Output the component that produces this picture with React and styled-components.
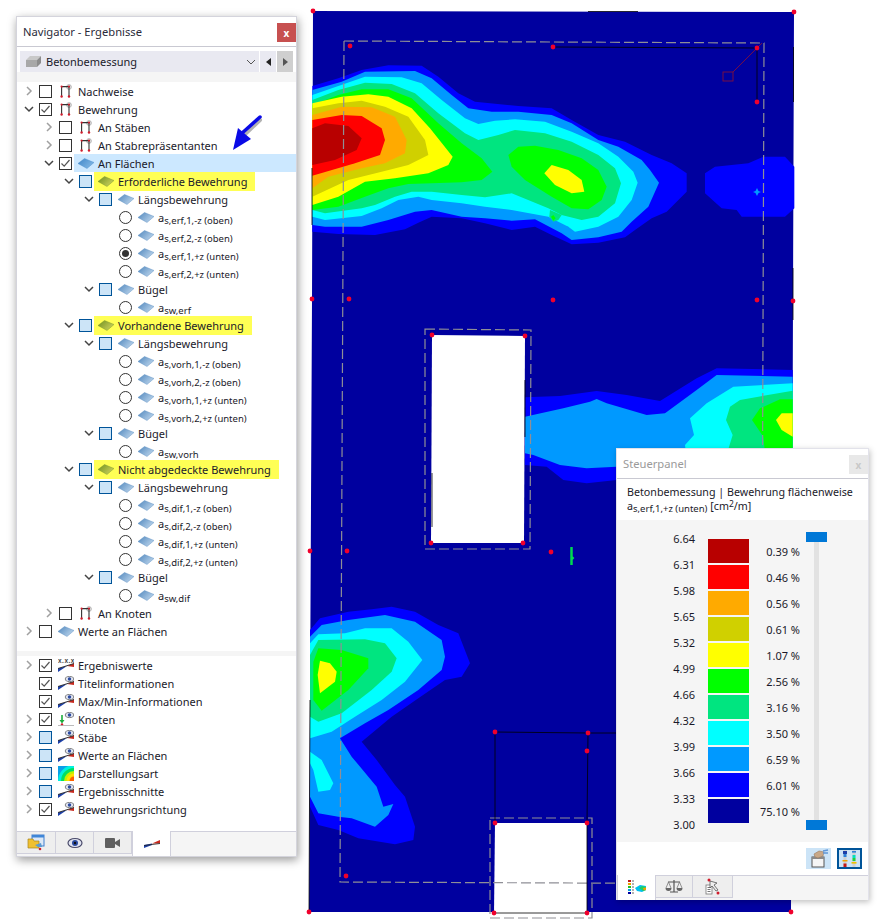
import styled, { createGlobalStyle } from 'styled-components'

const GlobalStyle = createGlobalStyle`
html, body {
  margin: 0;
  background: #fff;
}
* {
  box-sizing: border-box;
}
`

const Page = styled.div`
position: relative;
display: flex;
align-items: flex-start;
width: 878px;
height: 922px;
overflow: hidden;
background: #fff;
font-family: "Noto Sans", "Open Sans", sans-serif;
font-size: 11px;
color: #1a1a2a;
`

// navigator
const Navigator = styled.aside`
position: relative;
display: flex;
flex-direction: column;
flex: none;
width: 281px;
height: 841px;
margin: 16px 8px 0 16px;
background: #fff;
border: 1px solid #d4d4dc;
box-shadow: 1px 3px 9px rgba(0, 0, 0, 0.4);
`

const TitleBar = styled.div`
display: flex;
align-items: center;
justify-content: space-between;
flex: none;
height: 30px;
padding: 0 0 0 6px;
border-bottom: 1px solid #c9c9d2;
font-size: 11.2px;
color: ${p => (p.$muted ? '#9a9a9a' : '#2b2b3a')};
`

const CloseButton = styled.div`
display: flex;
align-items: center;
justify-content: center;
width: 19px;
height: 19px;
margin-top: 2px;
background: ${p => (p.$muted ? '#e8e8e8' : '#c75050')};
color: ${p => (p.$muted ? '#c8c8c8' : '#fff')};
font-weight: 700;
font-size: 10px;
line-height: 1;
`

const SelectRow = styled.div`
display: flex;
flex: none;
height: 21px;
margin: 4px 3px 0 3px;
gap: 1px;
`

const Select = styled.div`
display: flex;
align-items: center;
flex: 1;
padding: 0 3px 0 6px;
gap: 4px;
background: #e9e9f1;
span {
  flex: 1;
}
`

const StepButton = styled.div`
display: flex;
align-items: center;
justify-content: center;
width: 16px;
background: ${p => (p.$active ? '#cfcfcf' : '#e9e9f1')};
`

const Strip = styled.div`
flex: none;
height: ${p => p.$h}px;
background: #f5f5f5;
`

const Spacer = styled.div`
flex: none;
height: 11px;
`

const TreeList = styled.div`
display: flex;
flex-direction: column;
flex: none;
padding-left: 1px;
`

const Row = styled.div`
display: flex;
align-items: flex-start;
height: 18px;
padding-left: ${p => p.$level * 20}px;
`

const Chevron = styled.div`
display: flex;
align-items: center;
justify-content: center;
flex: none;
width: 21px;
height: 18px;
`

const CheckBox = styled.div`
display: flex;
align-items: center;
justify-content: center;
flex: none;
width: 13px;
height: 13px;
margin-top: 3px;
background: ${p => (p.$kind === 'blue' ? '#cce4f7' : '#fff')};
border: 1px solid ${p => (p.$kind === 'blue' ? '#005499' : '#333')};
`

const Radio = styled.div`
display: flex;
align-items: center;
justify-content: center;
flex: none;
width: 13px;
height: 13px;
margin-top: 3px;
border: 1px solid #333;
border-radius: 50%;
background: #fff;
&::after {
  content: '';
  display: ${p => (p.$on ? 'block' : 'none')};
  width: 7px;
  height: 7px;
  border-radius: 50%;
  background: #333;
}
`

const RowBody = styled.div`
display: flex;
align-items: center;
flex: ${p => (p.$selected ? 1 : 'none')};
height: ${p => (p.$marked ? 19 : 18)}px;
margin-left: 2px;
padding: 0 8px ${p => (p.$marked ? 1 : 0)}px 4px;
gap: 5px;
background: ${p => (p.$selected ? '#cce8ff' : p.$marked ? '#ffff55' : 'transparent')};
white-space: nowrap;
`

const IconSlot = styled.span`
display: flex;
flex: none;
width: 16px;
height: 15px;
margin-right: -1px;
`

const Label = styled.span`
padding-top: 2px;
line-height: 16px;
`

const Small = styled.span`
font-size: 9.5px;
position: relative;
top: 2px;
`

const TabBar = styled.div`
display: flex;
flex: none;
height: 25px;
margin-top: auto;
background: #f5f5f5;
border-top: 1px solid #d0d0dc;
`

const Tab = styled.div`
display: flex;
align-items: center;
justify-content: center;
width: ${p => p.$w}px;
height: ${p => (p.$active ? 25 : 22)}px;
margin-top: ${p => (p.$active ? -1 : 0)}px;
background: ${p => (p.$active ? '#fff' : '#eeeeee')};
border-right: 1px solid #d0d0dc;
border-left: ${p => (p.$active ? '1px solid #d0d0dc' : 'none')};
border-bottom: ${p => (p.$active ? 'none' : '1px solid #d0d0dc')};
`

const ArrowMark = styled.svg`
position: absolute;
left: 208px;
top: 92px;
`

const Canvas = styled.svg`
display: block;
flex: none;
`

// control panel
const ControlPanel = styled.aside`
position: absolute;
left: 616px;
top: 448px;
display: flex;
flex-direction: column;
width: 253px;
height: 452px;
background: #fff;
border: 1px solid #e2e2ea;
box-shadow: 1px 2px 6px rgba(0, 0, 0, 0.25);
`

const PanelHead = styled.div`
flex: none;
height: 41px;
padding: 6px 10px 0;
font-size: 10.7px;
line-height: 14px;
white-space: nowrap;
sup {
  font-size: 8.5px;
  line-height: 0;
  vertical-align: 3px;
}
`

const LegendArea = styled.div`
display: flex;
flex: none;
height: 322px;
padding: 6px 0 0 0;
background: #f5f5f5;
`

const Values = styled.div`
display: flex;
flex-direction: column;
flex: none;
width: 78px;
text-align: right;
div {
  height: 26px;
  line-height: 26px;
}
`

const Bars = styled.div`
flex: none;
width: 41px;
margin: 13px 0 0 13px;
`

const Bar = styled.div`
height: 24px;
margin-bottom: 2px;
background: ${p => p.$color};
`

const Percents = styled.div`
display: flex;
flex-direction: column;
flex: none;
width: 51px;
margin-top: 13px;
text-align: right;
div {
  height: 26px;
  line-height: 26px;
}
`

const Slider = styled.div`
display: flex;
flex-direction: column;
align-items: center;
flex: none;
width: 21px;
height: 298px;
margin: 6px 0 0 6px;
`

const SliderThumb = styled.div`
flex: none;
width: 21px;
height: 10px;
background: #0078d7;
`

const SliderTrack = styled.div`
flex: 1;
width: 5px;
background: #e2e2e2;
`

const ToolRow = styled.div`
display: flex;
justify-content: flex-end;
align-items: flex-start;
flex: none;
height: 33px;
padding: 6px 6px 0 0;
gap: 6px;
`

const ToolButton = styled.div`
display: flex;
align-items: center;
justify-content: center;
width: 25px;
height: 21px;
background: #cce4f7;
border: ${p => (p.$framed ? '2px solid #005499' : 'none')};
`

const treeRows = [
  { level: 0, chev: 'closed', box: 'empty', icon: 'frame', text: 'Nachweise' },
  { level: 0, chev: 'open', box: 'checked', icon: 'frame', text: 'Bewehrung' },
  { level: 1, chev: 'closed', box: 'empty', icon: 'frame', text: 'An Stäben' },
  { level: 1, chev: 'closed', box: 'empty', icon: 'frame', text: 'An Stabrepräsentanten' },
  { level: 1, chev: 'open', box: 'checked', icon: 'plateSel', text: 'An Flächen', selected: true },
  { level: 2, chev: 'open', box: 'blue', icon: 'plateGreen', text: 'Erforderliche Bewehrung', marked: true },
  { level: 3, chev: 'open', box: 'blue', icon: 'plate', text: 'Längsbewehrung' },
  { level: 4, radio: true, icon: 'plate', sub: 's,erf,1,-z (oben)' },
  { level: 4, radio: true, icon: 'plate', sub: 's,erf,2,-z (oben)' },
  { level: 4, radio: true, on: true, icon: 'plate', sub: 's,erf,1,+z (unten)' },
  { level: 4, radio: true, icon: 'plate', sub: 's,erf,2,+z (unten)' },
  { level: 3, chev: 'open', box: 'blue', icon: 'plate', text: 'Bügel' },
  { level: 4, radio: true, icon: 'plate', sub: 'sw,erf' },
  { level: 2, chev: 'open', box: 'blue', icon: 'plateGreen', text: 'Vorhandene Bewehrung', marked: true },
  { level: 3, chev: 'open', box: 'blue', icon: 'plate', text: 'Längsbewehrung' },
  { level: 4, radio: true, icon: 'plate', sub: 's,vorh,1,-z (oben)' },
  { level: 4, radio: true, icon: 'plate', sub: 's,vorh,2,-z (oben)' },
  { level: 4, radio: true, icon: 'plate', sub: 's,vorh,1,+z (unten)' },
  { level: 4, radio: true, icon: 'plate', sub: 's,vorh,2,+z (unten)' },
  { level: 3, chev: 'open', box: 'blue', icon: 'plate', text: 'Bügel' },
  { level: 4, radio: true, icon: 'plate', sub: 'sw,vorh' },
  { level: 2, chev: 'open', box: 'blue', icon: 'plateGreen', text: 'Nicht abgedeckte Bewehrung', marked: true },
  { level: 3, chev: 'open', box: 'blue', icon: 'plate', text: 'Längsbewehrung' },
  { level: 4, radio: true, icon: 'plate', sub: 's,dif,1,-z (oben)' },
  { level: 4, radio: true, icon: 'plate', sub: 's,dif,2,-z (oben)' },
  { level: 4, radio: true, icon: 'plate', sub: 's,dif,1,+z (unten)' },
  { level: 4, radio: true, icon: 'plate', sub: 's,dif,2,+z (unten)' },
  { level: 3, chev: 'open', box: 'blue', icon: 'plate', text: 'Bügel' },
  { level: 4, radio: true, icon: 'plate', sub: 'sw,dif' },
  { level: 1, chev: 'closed', box: 'empty', icon: 'frame', text: 'An Knoten' },
  { level: 0, chev: 'closed', box: 'empty', icon: 'plate', text: 'Werte an Flächen' },
]

const optionRows = [
  { level: 0, chev: 'closed', box: 'checked', icon: 'xxx', text: 'Ergebniswerte' },
  { level: 0, box: 'checked', icon: 'eye', text: 'Titelinformationen' },
  { level: 0, box: 'checked', icon: 'eye', text: 'Max/Min-Informationen' },
  { level: 0, chev: 'closed', box: 'checked', icon: 'node', text: 'Knoten' },
  { level: 0, chev: 'closed', box: 'blue', icon: 'eye', text: 'Stäbe' },
  { level: 0, chev: 'closed', box: 'blue', icon: 'eye', text: 'Werte an Flächen' },
  { level: 0, chev: 'closed', box: 'blue', icon: 'contour', text: 'Darstellungsart' },
  { level: 0, chev: 'closed', box: 'blue', icon: 'eye', text: 'Ergebnisschnitte' },
  { level: 0, chev: 'closed', box: 'checked', icon: 'eye', text: 'Bewehrungsrichtung' },
]

const legend = [
  { value: '6.64', color: '#b80000', pct: '0.39 %' },
  { value: '6.31', color: '#ff0000', pct: '0.46 %' },
  { value: '5.98', color: '#ffaa00', pct: '0.56 %' },
  { value: '5.65', color: '#d0d000', pct: '0.61 %' },
  { value: '5.32', color: '#ffff00', pct: '1.07 %' },
  { value: '4.99', color: '#00ff00', pct: '2.56 %' },
  { value: '4.66', color: '#00e580', pct: '3.16 %' },
  { value: '4.32', color: '#00ffff', pct: '3.50 %' },
  { value: '3.99', color: '#0099ff', pct: '6.59 %' },
  { value: '3.66', color: '#0000ff', pct: '6.01 %' },
  { value: '3.33', color: '#00009f', pct: '75.10 %' },
]

const ChevronIcon = ({ open }) => (
  <svg width="10" height="10" viewBox="0 0 10 10">
    {open
      ? <polyline points="1,3 5,7 9,3" fill="none" stroke="#444" strokeWidth="1.5" />
      : <polyline points="3,1 7,5 3,9" fill="none" stroke="#a0a0a0" strokeWidth="1.5" />}
  </svg>
)

const CheckMark = () => (
  <svg width="11" height="11" viewBox="0 0 11 11">
    <polyline points="1.5,5.5 4.2,8.2 9.5,2" fill="none" stroke="#555" strokeWidth="1.2" />
  </svg>
)

const Wedge = () => (
  <>
    <polygon points="0,10.5 9,8 0,14" fill="#1c3fa8" />
    <polygon points="9,8 16,5.5 16,9" fill="#c8291e" />
    <line x1="0" y1="10.5" x2="16" y2="5.5" stroke="#222" strokeWidth="0.9" />
  </>
)

const Eye = () => (
  <>
    <ellipse cx="11.5" cy="3" rx="4.2" ry="2.6" fill="#dfe3f0" stroke="#555" strokeWidth="0.7" />
    <circle cx="11.5" cy="3" r="1.7" fill="#2a4aa0" />
  </>
)

const TreeIcon = ({ name }) => {
  if (name === 'frame') {
    return (
      <svg width="16" height="15" viewBox="0 0 16 15">
        <circle cx="11" cy="3" r="2.4" fill="#e2e2e2" stroke="#a0a0a0" strokeWidth="0.7" />
        <path d="M3.6 2.6H11M3.6 2.6V12.5M11 2.6V12.5" fill="none" stroke="#333" strokeWidth="1.1" />
        <circle cx="3.6" cy="2.6" r="1.1" fill="#d01c2c" />
        <circle cx="11" cy="2.6" r="1.1" fill="#d01c2c" />
        <circle cx="3.6" cy="12.5" r="1.2" fill="#d01c2c" />
        <circle cx="11" cy="12.5" r="1.2" fill="#d01c2c" />
      </svg>
    )
  }
  if (name === 'plate' || name === 'plateSel' || name === 'plateGreen') {
    const c = {
      plate: ['#4f86bd', '#b8d2ea'],
      plateSel: ['#3f86c8', '#7fb6e4'],
      plateGreen: ['#6f8f20', '#c9cf5a'],
    }[name]
    return (
      <svg width="16" height="15" viewBox="0 0 16 15">
        <defs>
          <linearGradient id={name} x1="0" y1="0" x2="1" y2="0.6">
            <stop offset="0" stopColor={c[0]} />
            <stop offset="1" stopColor={c[1]} />
          </linearGradient>
        </defs>
        <polygon points="0,7.5 6.5,2.5 16,6.5 9,12.5" fill={`url(#${name})`} stroke={c[0]} strokeWidth="0.4" />
      </svg>
    )
  }
  if (name === 'xxx') {
    return (
      <svg width="16" height="15" viewBox="0 0 16 15">
        <text x="0" y="5" fontSize="6.5" fontWeight="700" letterSpacing="0.5" fill="#444" fontFamily="Liberation Sans, sans-serif">x.x.x</text>
        <Wedge />
      </svg>
    )
  }
  if (name === 'eye') {
    return (
      <svg width="16" height="15" viewBox="0 0 16 15">
        <Wedge />
        <Eye />
      </svg>
    )
  }
  if (name === 'node') {
    return (
      <svg width="16" height="15" viewBox="0 0 16 15">
        <Eye />
        <path d="M4 3V9" stroke="#1cae3c" strokeWidth="1.6" />
        <polygon points="1.5,8 6.5,8 4,11.5" fill="#1cae3c" />
        <circle cx="4" cy="12.5" r="1.2" fill="#d01c2c" />
        <line x1="0" y1="13.5" x2="16" y2="13.5" stroke="#aaa" strokeWidth="0.8" />
      </svg>
    )
  }
  // Darstellungsart
  return (
    <svg width="16" height="15" viewBox="0 0 16 15">
      <rect width="16" height="15" fill="#0aa0e8" />
      <circle cx="16" cy="15" r="16" fill="#00f0e0" />
      <circle cx="16" cy="15" r="13" fill="#00e060" />
      <circle cx="16" cy="15" r="10" fill="#c0f000" />
      <circle cx="16" cy="15" r="7.5" fill="#ffe000" />
      <circle cx="16" cy="15" r="4.5" fill="#ff6000" />
    </svg>
  )
}

const TreeRow = ({ row }) => (
  <Row $level={row.level}>
    <Chevron>{row.chev && <ChevronIcon open={row.chev === 'open'} />}</Chevron>
    {row.radio
      ? <Radio $on={row.on} />
      : <CheckBox $kind={row.box}>{row.box === 'checked' && <CheckMark />}</CheckBox>}
    <RowBody $selected={row.selected} $marked={row.marked}>
      <IconSlot><TreeIcon name={row.icon} /></IconSlot>
      <Label>
        {row.sub ? <>a<Small>{row.sub}</Small></> : row.text}
      </Label>
    </RowBody>
  </Row>
)

const Blob = ({ at, scale = 1 / 3, shapes }) => (
  <g transform={`translate(${at[0]} ${at[1]}) scale(${scale})`}>
    {shapes.map((s, i) => <polygon key={i} fill={s[0]} points={s[1]} />)}
  </g>
)

const topBlob = [
  ['#0000ff', '22,258 100,235 170,210 250,196 350,197 400,230 460,280 510,305 640,318 740,325 800,360 880,405 960,425 1040,465 1100,490 1145,520 1145,575 1085,635 1040,655 990,690 960,712 880,728 800,733 740,705 690,680 620,690 540,670 470,655 380,650 340,668 300,688 210,705 100,702 22,695'],
  ['#0099ff', '22,270 110,245 180,215 330,213 380,235 440,285 490,325 560,335 640,335 740,345 800,370 880,420 940,440 1010,480 1035,510 1062,548 1030,620 980,665 950,695 880,712 800,720 770,700 690,658 620,662 540,655 470,650 380,630 330,635 250,660 170,680 60,680 22,675'],
  ['#00ffff', '22,285 100,258 180,230 290,232 350,250 410,300 480,355 520,372 570,362 630,358 720,365 800,395 880,430 940,470 985,515 998,548 980,600 940,650 880,680 810,695 790,680 730,650 620,630 540,620 470,610 380,600 340,590 280,600 230,625 170,648 60,660 22,650'],
  ['#00e580', '22,300 100,270 180,248 260,252 330,280 400,340 480,400 520,420 580,405 630,390 720,400 800,425 880,465 930,505 948,550 930,610 880,650 830,660 770,645 730,625 620,580 540,592 470,585 380,575 320,575 270,590 210,615 170,625 60,640 22,630'],
  ['#00ff00', '22,315 100,285 170,268 250,268 320,295 400,370 470,430 530,475 562,515 530,540 470,547 380,550 310,552 250,565 180,590 100,620 22,630'],
  ['#ffff00', '22,310 110,290 190,283 250,290 320,325 375,385 415,435 443,470 430,495 370,520 270,535 180,545 100,590 22,615'],
  ['#d0d000', '22,325 100,310 170,302 240,320 310,350 360,420 370,465 310,495 230,515 130,540 22,590'],
  ['#ffaa00', '22,345 110,320 200,322 270,350 305,420 300,460 240,490 170,505 70,530 22,565'],
  ['#ff0000', '22,360 110,345 170,348 230,385 240,420 225,465 150,490 22,527'],
  ['#b80000', '22,385 60,370 130,378 170,415 155,450 90,480 22,495'],
  ['#00ff00', '610,465 640,440 690,437 760,450 830,475 880,510 905,560 890,600 850,628 800,625 740,590 660,540 620,500'],
  ['#ffff00', '718,520 740,495 790,510 830,540 838,575 800,580 750,555'],
  ['#00e580', '735,630 770,645 760,660 745,665 733,650'],
  ['#00ff00', '738,650 745,645 752,655 745,662'],
  ['#0099ff', '745,672 790,680 798,708 770,695'],
  ['#0000ff', '1200,520 1230,500 1330,490 1375,470 1440,470 1468,500 1468,625 1440,650 1310,650 1295,630 1250,625 1200,580'],
]

const lowerBlob = [
  ['#0000ff', '15,90 45,55 130,35 200,28 260,20 330,35 400,75 460,100 495,190 470,230 420,240 340,295 260,350 170,425 215,480 270,555 300,590 330,680 325,720 270,733 160,715 100,690 40,675 15,620'],
  ['#0099ff', '15,110 50,75 130,60 240,45 330,65 410,120 420,170 410,210 340,270 250,330 180,370 105,415 140,470 215,560 235,620 265,612 250,645 210,680 140,655 100,650 40,640 15,590'],
  ['#00ffff', '15,130 40,103 120,100 180,85 260,85 310,125 352,180 300,245 230,300 150,350 80,395 15,415'],
  ['#00e580', '15,165 40,120 180,118 240,130 275,175 260,215 200,270 110,340 40,365 15,350'],
  ['#00ff00', '25,185 40,145 110,150 190,175 190,205 130,270 50,332 25,300'],
  ['#ffff00', '38,225 45,182 75,190 95,215 90,245 45,280'],
  ['#00ffff', '15,455 50,480 85,550 75,570 40,575 25,510 15,490'],
]

const sideBlob = [
  ['#0000ff', '315,232 420,228 530,213 620,225 720,243 830,175 890,145 1118,150 1118,480 590,480 500,490 430,480 380,440 315,435'],
  ['#0099ff', '315,290 430,265 510,245 530,237 560,250 680,285 735,280 830,210 890,165 1118,170 1118,445 590,440 500,445 420,435 340,405 315,400'],
  ['#00ffff', '810,295 860,250 940,200 1118,190 1118,420 800,420 795,375 822,345'],
  ['#00e580', '918,300 930,260 960,240 1118,212 1118,420 915,420 938,345'],
  ['#00ff00', '996,300 1020,265 1080,238 1118,238 1118,400 1035,400 1030,350'],
  ['#ffff00', '1068,300 1085,280 1118,280 1118,350 1085,330'],
]

const dots = [
  [313, 11], [794, 12], [350, 46], [553, 47], [757, 48], [757, 102],
  [312, 299], [349, 299], [553, 300], [757, 300], [793, 301],
  [432, 335], [525, 336], [431, 543], [523, 543],
  [310, 551], [347, 551], [551, 552],
  [495, 732], [588, 733], [587, 751], [495, 823], [587, 823],
  [346, 876], [309, 912], [494, 913], [587, 913], [791, 912],
]

const ContourPlot = () => (
  <Canvas width="573" height="922" viewBox="305 0 573 922">
    <polygon points="313,11 794,12 793,301 791,912 309,912 312,299" fill="#00009f" />
    <Blob at={[305, 0]} shapes={topBlob} />
    <Blob at={[420, 320]} shapes={sideBlob} />
    <Blob at={[305, 600]} shapes={lowerBlob} />
    <polygon points="432,335 525,336 524,543 431,543" fill="#fff" />
    <polygon points="495,823 587,823 587,914 494,914" fill="#fff" />
    <g fill="none" stroke="#8f8f96" strokeWidth="1.2" strokeDasharray="10 4">
      <polyline points="344,41 764,43 762,620" />
      <polyline points="344,41 340,882 800,884" />
      <polygon points="425,329 531,330 530,549 425,549" />
      <polygon points="490,818 592,818 592,918 490,918" />
    </g>
    <g fill="none" stroke="#000" strokeWidth="0.8">
      <polyline points="553,47 757,48 757,102" />
      <polyline points="495,823 495,732 588,733 587,823" />
      <line x1="588" y1="733" x2="620" y2="733" />
      <line x1="525" y1="380" x2="525" y2="437" />
      <line x1="432" y1="473" x2="432" y2="527" />
      <polyline points="494,913 587,913 587,823" />
      <line x1="312" y1="168" x2="312" y2="225" />
      <line x1="793.5" y1="47" x2="793.5" y2="102" />
      <line x1="793" y1="268" x2="793" y2="320" />
      <line x1="588" y1="11.5" x2="638" y2="11.5" />
      <line x1="310" y1="700" x2="309" y2="912" />
    </g>
    <g fill="none" stroke="#80103c" strokeWidth="0.9">
      <rect x="723" y="72" width="10" height="9" />
      <line x1="733" y1="72" x2="762" y2="43" />
    </g>
    <polygon points="757,188 758.5,191 761,192 758.5,193 757,196 755.5,193 753,192 755.5,191" fill="#0099ff" />
    <path d="M571.5 547V565M571.5 557L573.5 559" fill="none" stroke="#00d850" strokeWidth="2.5" />
    {dots.map(d => <circle key={d.join()} cx={d[0]} cy={d[1]} r="2.4" fill="#f0002c" />)}
  </Canvas>
)

const FolderTabIcon = () => (
  <svg width="18" height="18" viewBox="0 0 18 18">
    <rect x="5" y="1" width="12" height="11" fill="#dce8f6" stroke="#3f7fcf" />
    <rect x="5" y="1" width="12" height="2.5" fill="#3f86d8" />
    <path d="M1 5H6L7 7H12V14H1Z" fill="#f0c030" stroke="#a8841c" strokeWidth="0.7" />
    <polygon points="8,11 14,9 15,13 11,13" fill="#5a9ad0" />
    <circle cx="13" cy="15" r="1.3" fill="#d01c2c" />
  </svg>
)

const EyeTabIcon = () => (
  <svg width="16" height="12" viewBox="0 0 16 12">
    <ellipse cx="8" cy="6" rx="7" ry="4.5" fill="#dfe3f0" stroke="#4a4a6a" strokeWidth="1.2" />
    <circle cx="8" cy="6" r="3" fill="#2a4aa0" />
    <circle cx="8" cy="6" r="1.2" fill="#111" />
  </svg>
)

const CameraTabIcon = () => (
  <svg width="15" height="10" viewBox="0 0 15 10">
    <rect x="0" y="0" width="10" height="10" rx="1" fill="#5f5f5f" />
    <polygon points="10,4 15,1 15,9 10,6" fill="#5f5f5f" />
  </svg>
)

const WedgeTabIcon = () => (
  <svg width="16" height="8" viewBox="0 0 16 8">
    <polygon points="0,5 8,3.5 8,5 0,8" fill="#1c3fa8" />
    <polygon points="8,3.5 16,0 16,3.5" fill="#c8291e" />
    <line x1="0" y1="5.5" x2="16" y2="3.5" stroke="#222" strokeWidth="0.8" />
  </svg>
)

const LegendTabIcon = () => (
  <svg width="18" height="15" viewBox="0 0 18 15">
    <rect x="0" y="0" width="3" height="2" fill="#c01818" />
    <rect x="0" y="3" width="3" height="2" fill="#f0a000" />
    <rect x="0" y="6" width="3" height="2" fill="#20c020" />
    <rect x="0" y="9" width="3" height="2" fill="#00a0e0" />
    <rect x="0" y="12" width="3" height="2" fill="#0000a0" />
    <path d="M4 1H6M4 4H6M4 7H6M4 10H6M4 13H6" stroke="#666" />
    <polygon points="7,8 12,5 18,6 18,10 14,12 9,11" fill="#00c0f0" />
    <polygon points="11,8 14,6 18,7 18,10 15,11" fill="#20d060" />
    <polygon points="15,8 18,7.5 18,10 16,10.5" fill="#f0a000" />
  </svg>
)

const ScaleTabIcon = () => (
  <svg width="18" height="15" viewBox="0 0 18 15">
    <path d="M9 1V13M3 3H15M5 13H13" fill="none" stroke="#555" strokeWidth="1.2" />
    <path d="M3.5 3L1 9M3.5 3L6 9M14.5 3L12 9M14.5 3L17 9" fill="none" stroke="#777" strokeWidth="0.8" />
    <path d="M0.5 9A3 3 0 0 0 6.5 9ZM11.5 9A3 3 0 0 0 17.5 9Z" fill="#666" />
  </svg>
)

const PointerTabIcon = () => (
  <svg width="16" height="18" viewBox="0 0 16 18">
    <rect x="1" y="7" width="6" height="9" fill="#fff" stroke="#777" strokeWidth="0.8" />
    <path d="M2.5 9.5H5.5M2.5 11.5H5.5M2.5 13.5H5.5" stroke="#777" />
    <polygon points="5,3 12,5 9,7 13,12 11,13 7,8 5,10" fill="#eee" stroke="#555" strokeWidth="0.8" />
    <circle cx="4" cy="2" r="1.5" fill="#d01c2c" />
    <circle cx="13" cy="15" r="1.5" fill="#d01c2c" />
  </svg>
)

const HandIcon = () => (
  <svg width="21" height="19" viewBox="0 0 21 19">
    <rect x="4" y="8" width="12" height="10" fill="#f5f5f5" stroke="#555" />
    <rect x="4" y="8" width="12" height="2" fill="#8a8a8a" />
    <path d="M6 5L11 2L16 3L15 7L10 9L7 8Z" fill="#c8a888" stroke="#9a7a60" strokeWidth="0.6" />
    <path d="M15 2L20 1M15 4L20 4" stroke="#5f96d8" strokeWidth="1.4" />
  </svg>
)

const SlidersIcon = () => (
  <svg width="19" height="17" viewBox="0 0 19 17">
    <rect x="3.5" y="0" width="3" height="17" fill="#d0d0d0" />
    <rect x="3" y="1" width="4" height="3" fill="#1c3fa8" />
    <rect x="3.5" y="4" width="3" height="3" fill="#2a80d8" />
    <rect x="2.5" y="10" width="5" height="1.5" fill="#f0a000" />
    <rect x="3.5" y="13.5" width="3" height="3.5" fill="#c01818" />
    <rect x="12.5" y="0" width="3" height="17" fill="#d0d0d0" />
    <rect x="12" y="1" width="4" height="1.6" fill="#2a80d8" />
    <rect x="12.5" y="5" width="3" height="3" fill="#00e0c0" />
    <rect x="12.5" y="8" width="3" height="3" fill="#20d040" />
    <rect x="11.5" y="12" width="5" height="1.6" fill="#f0c000" />
  </svg>
)

export default function App () {
  return (
    <Page>
      <GlobalStyle />

      <Navigator>
        <TitleBar>
          <span>Navigator - Ergebnisse</span>
          <CloseButton>x</CloseButton>
        </TitleBar>

        <SelectRow>
          <Select>
            <svg width="16" height="13" viewBox="0 0 16 13">
              <polygon points="0,5 4,1 15,1 11,5" fill="#c8c8c8" />
              <polygon points="0,5 11,5 11,12 0,12" fill="#a8a8a8" />
              <polygon points="11,5 15,1 15,8 11,12" fill="#8c8c8c" />
            </svg>
            <span>Betonbemessung</span>
            <svg width="10" height="8" viewBox="0 0 10 8">
              <polyline points="1,2 5,6 9,2" fill="none" stroke="#555" strokeWidth="1" />
            </svg>
          </Select>
          <StepButton>
            <svg width="5" height="8" viewBox="0 0 5 8"><polygon points="5,0 0,4 5,8" fill="#222" /></svg>
          </StepButton>
          <StepButton $active>
            <svg width="5" height="8" viewBox="0 0 5 8"><polygon points="0,0 5,4 0,8" fill="#555" /></svg>
          </StepButton>
        </SelectRow>
        <Strip $h={10} />

        <TreeList>
          {treeRows.map((row, i) => <TreeRow key={i} row={row} />)}
        </TreeList>

        <Spacer />
        <Strip $h={5} />

        <TreeList>
          {optionRows.map((row, i) => <TreeRow key={i} row={row} />)}
        </TreeList>

        <TabBar>
          <Tab $w={39}><FolderTabIcon /></Tab>
          <Tab $w={38}><EyeTabIcon /></Tab>
          <Tab $w={38}><CameraTabIcon /></Tab>
          <Tab $w={39} $active><WedgeTabIcon /></Tab>
        </TabBar>

        <ArrowMark width="40" height="46" viewBox="0 0 40 46">
          <path d="M34 9L15 27" stroke="rgba(0,0,0,0.3)" strokeWidth="4" strokeLinecap="round" transform="translate(1 2)" />
          <path d="M35 8L16 25" stroke="#0a0ae6" strokeWidth="3.5" strokeLinecap="round" />
          <polygon points="8,41 13,19 26,30" fill="#0a0ae6" />
        </ArrowMark>
      </Navigator>

      <ContourPlot />

      <ControlPanel>
        <TitleBar $muted>
          <span>Steuerpanel</span>
          <CloseButton $muted>x</CloseButton>
        </TitleBar>
        <PanelHead>
          <div>Betonbemessung | Bewehrung flächenweise</div>
          <div>a<Small>s,erf,1,+z (unten)</Small> [cm<sup>2</sup>/m]</div>
        </PanelHead>
        <LegendArea>
          <Values>
            {legend.map(l => <div key={l.value}>{l.value}</div>)}
            <div>3.00</div>
          </Values>
          <Bars>
            {legend.map(l => <Bar key={l.value} $color={l.color} />)}
          </Bars>
          <Percents>
            {legend.map(l => <div key={l.value}>{l.pct}</div>)}
          </Percents>
          <Slider>
            <SliderThumb />
            <SliderTrack />
            <SliderThumb />
          </Slider>
        </LegendArea>
        <ToolRow>
          <ToolButton><HandIcon /></ToolButton>
          <ToolButton $framed><SlidersIcon /></ToolButton>
        </ToolRow>
        <TabBar>
          <Tab $w={39} $active><LegendTabIcon /></Tab>
          <Tab $w={37}><ScaleTabIcon /></Tab>
          <Tab $w={40}><PointerTabIcon /></Tab>
        </TabBar>
      </ControlPanel>
    </Page>
  )
}
